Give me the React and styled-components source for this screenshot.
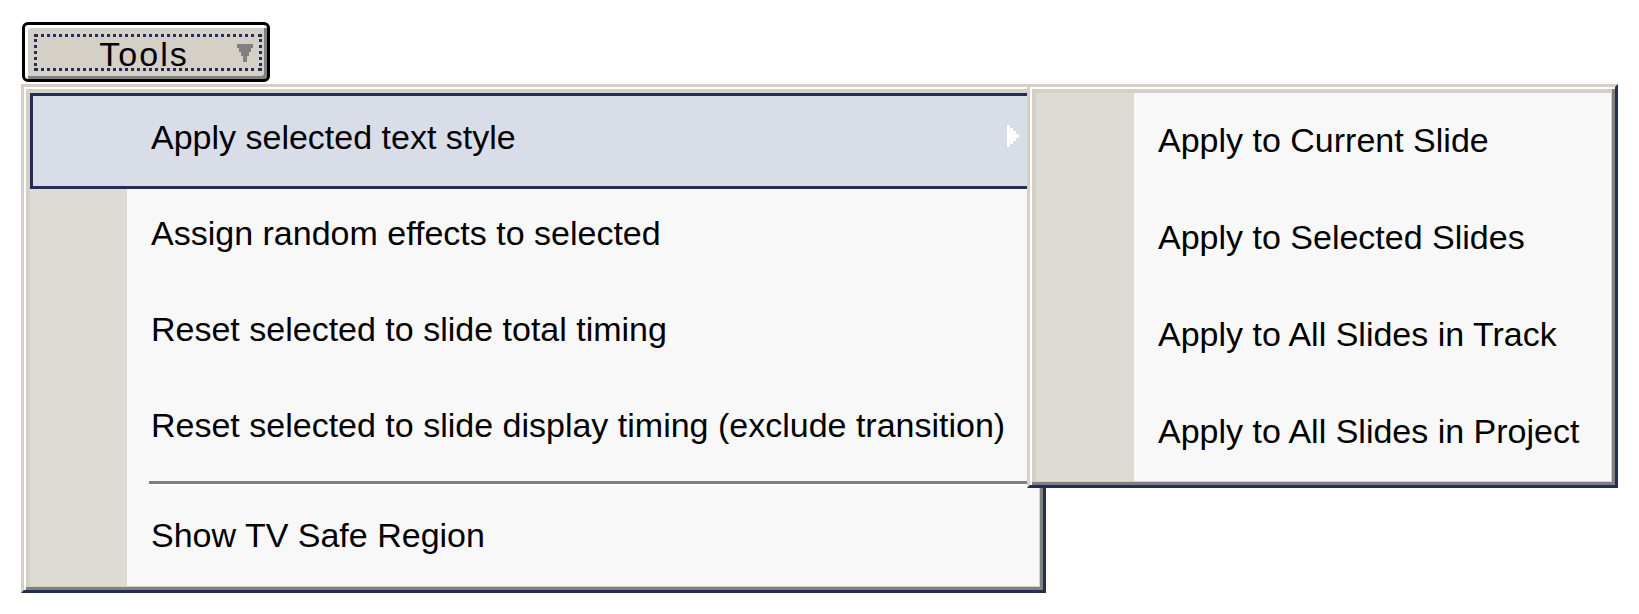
import React from "react";
import styled, { createGlobalStyle } from "styled-components";

const GlobalStyle = createGlobalStyle`
  html, body {
    margin: 0;
    padding: 0;
    background: #ffffff;
  }
  body {
    font-family: "Liberation Sans", Arial, sans-serif;
    color: #000;
  }
`;

const NAVY = "#232f52";
const FACE = "#d4d0c8";

const mainItems = [
  { label: "Apply selected text style", selected: true, sub: true },
  { label: "Assign random effects to selected" },
  { label: "Reset selected to slide total timing" },
  { label: "Reset selected to slide display timing (exclude transition)" },
  { separator: true },
  { label: "Show TV Safe Region" },
];

const subItems = [
  "Apply to Current Slide",
  "Apply to Selected Slides",
  "Apply to All Slides in Track",
  "Apply to All Slides in Project",
];

export default function App() {
  return (
    <>
      <GlobalStyle />
      <Page>
        <ToolsButton>
          <Focus>
            <ButtonLabel>Tools</ButtonLabel>
            <svg width="16" height="18" viewBox="0 0 16 18">
              <path
                d="M0 0H16V4H14V8H12V12H10V18H6V12H4V8H2V4H0Z"
                fill="#808080"
              />
            </svg>
          </Focus>
        </ToolsButton>

        <MenuArea>
          <Frame $width={1025}>
            {mainItems.map((item, i) =>
              item.separator ? (
                <SeparatorRow key={i}>
                  <IconCell />
                  <Rule />
                </SeparatorRow>
              ) : (
                <Item key={i} $selected={item.selected} $height={96}>
                  <IconCell $selected={item.selected} />
                  <Text $lift={i === 5 ? 6 : 8}>{item.label}</Text>
                  {item.sub && (
                    <SubArrow width="12" height="22" viewBox="0 0 12 22">
                      <path
                        d="M0 0H3V3H6V6H9V9H12V13H9V16H6V19H3V22H0Z"
                        fill="#ffffff"
                      />
                    </SubArrow>
                  )}
                </Item>
              )
            )}
          </Frame>

          <SubFrame $width={591}>
            {subItems.map((label) => (
              <Item key={label} $height={97}>
                <IconCell $w={98} />
                <Text $lift={4}>{label}</Text>
              </Item>
            ))}
          </SubFrame>
        </MenuArea>
      </Page>
    </>
  );
}

const Page = styled.div`
  padding: 22px 0 0 21px;
  min-height: 614px;
  box-sizing: border-box;
`;

const ToolsButton = styled.div`
  width: 248px;
  height: 60px;
  margin-left: 1px;
  box-sizing: border-box;
  border: 3px solid #000;
  border-radius: 6px;
  background: ${FACE};
  box-shadow: inset 3px 3px #ffffff, inset -3px -3px #808080;
  padding: 9px 5px 8px 9px;
  display: flex;
`;

const Focus = styled.div`
  flex: 1;
  display: flex;
  align-items: center;
  border: 3px dotted ${NAVY};
  padding-right: 6px;
`;

const ButtonLabel = styled.span`
  flex: 1;
  text-align: center;
  padding-left: 14px;
  font-size: 34px;
  letter-spacing: 2px;
  line-height: 1;
  padding-top: 2px;
`;

const MenuArea = styled.div`
  position: relative;
  margin-top: 2px;
`;

const Frame = styled.div`
  width: ${(p) => p.$width}px;
  box-sizing: border-box;
  background: ${FACE};
  border: 3px solid;
  border-color: ${FACE} ${NAVY} ${NAVY} ${FACE};
  box-shadow: inset 2px 2px #ffffff, inset -3px -3px #808080;
  padding: 6px 4px 4px 6px;
  display: flex;
  flex-direction: column;
`;

const SubFrame = styled(Frame)`
  position: absolute;
  top: 0;
  left: 1006px;
`;

const Item = styled.div`
  height: ${(p) => p.$height}px;
  display: flex;
  align-items: center;
  position: relative;
  background: ${(p) => (p.$selected ? "#d9dde8" : "#f8f8f8")};
  box-shadow: ${(p) => (p.$selected ? `inset 0 0 0 3px ${NAVY}` : "none")};
`;

const IconCell = styled.div`
  align-self: stretch;
  width: ${(p) => p.$w || 97}px;
  flex-shrink: 0;
  background: ${(p) => (p.$selected ? "transparent" : "#dedbd4")};
`;

const Text = styled.span`
  padding-left: 24px;
  padding-bottom: ${(p) => p.$lift || 0}px;
  font-size: 34px;
  line-height: 1;
  white-space: nowrap;
  flex: 1;
`;

const SubArrow = styled.svg`
  position: absolute;
  right: 20px;
  top: 32px;
`;

const SeparatorRow = styled.div`
  display: flex;
  height: 13px;
  background: #f8f8f8;
`;

const Rule = styled.div`
  flex: 1;
  margin: 4px 0 0 22px;
  height: 3px;
  background: #808080;
  border-bottom: 2px solid #ffffff;
`;
